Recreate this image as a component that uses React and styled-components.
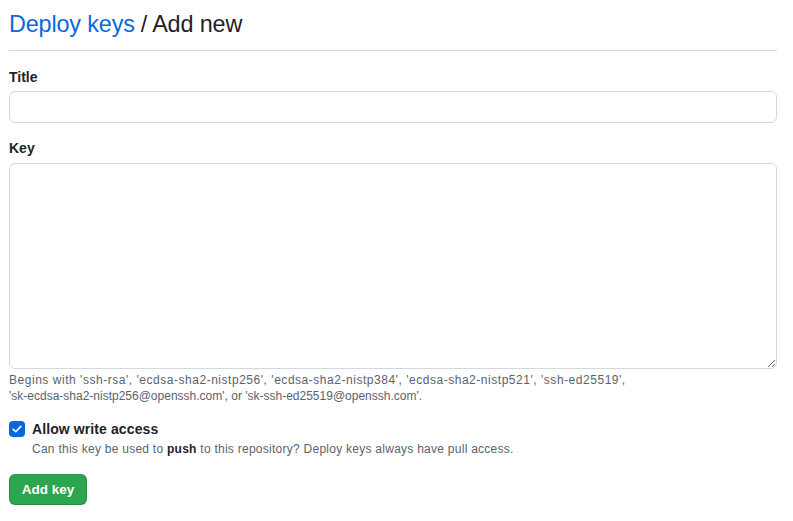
import React from "react";
import styled, { createGlobalStyle } from "styled-components";

const Global = createGlobalStyle`
  html, body { margin: 0; padding: 0; background: #fff; }
  body { font-family: "Liberation Sans", Arial, sans-serif; color: #1f2328; }
  * { box-sizing: border-box; }
`;

const Page = styled.div`
  padding: 0 16px 0 9px;
  width: 793px;
`;

const Header = styled.div`
  display: flex;
  align-items: center;
  height: 51px;
  padding-bottom: 1px;
  border-bottom: 1px solid #d1d9e0;
  margin-bottom: 16px;
  font-size: 23.4px;
  font-weight: 400;
  letter-spacing: -0.15px;
`;

const Crumb = styled.a`
  color: #0969da;
  text-decoration: none;
  margin-right: 6px;
`;

const Current = styled.span`
  color: #1f2328;
`;

const Field = styled.div`
  margin-bottom: ${(p) => p.$mb || 0}px;
`;

const Label = styled.label`
  display: block;
  font-size: 14px;
  font-weight: 700;
  line-height: 20px;
  margin-bottom: ${(p) => p.$mb ?? 5}px;
`;

const Input = styled.input`
  display: block;
  width: 100%;
  height: 32px;
  border: 1px solid #d1d9e0;
  border-radius: 6px;
  padding: 5px 12px;
  font-size: 14px;
  font-family: inherit;
  background: #fff;
  outline: none;
`;

const TextArea = styled.textarea`
  display: block;
  width: 100%;
  height: 206px;
  border: 1px solid #d1d9e0;
  border-radius: 6px;
  padding: 8px 12px;
  font-size: 14px;
  font-family: inherit;
  resize: vertical;
  outline: none;
`;

const Note = styled.p`
  margin: 3px 0 0;
  font-size: 12px;
  line-height: 16px;
  color: #59636e;
`;

const NoteLine = styled.span`
  display: block;
  letter-spacing: ${(p) => p.$ls || 0}px;
`;

const CheckRow = styled.div`
  display: flex;
  gap: 7px;
  margin-top: 15px;
`;

const Box = styled.span`
  flex: none;
  width: 16px;
  height: 16px;
  margin-top: 2px;
  border-radius: 4px;
  background: #0969da;
  display: flex;
  align-items: center;
  justify-content: center;
`;

const CheckText = styled.div`
  display: flex;
  flex-direction: column;
`;

const CheckLabel = styled.span`
  font-size: 14px;
  font-weight: 700;
  line-height: 20px;
  letter-spacing: 0.1px;
`;

const CheckNote = styled.span`
  font-size: 12px;
  line-height: 16px;
  letter-spacing: 0.26px;
  color: #59636e;
  margin-top: 2px;
  b { color: #1f2328; font-weight: 700; }
`;

const Button = styled.button`
  display: block;
  margin-top: 17px;
  width: 78px;
  height: 31px;
  padding: 0;
  border: 1px solid rgba(31, 35, 40, 0.15);
  border-radius: 6px;
  background: #2da44e;
  color: #fff;
  font-family: inherit;
  font-size: 13.5px;
  font-weight: 700;
  cursor: pointer;
`;

export default function App() {
  return (
    <>
      <Global />
      <Page>
        <Header>
          <Crumb href="#">Deploy keys</Crumb>
          <Current>/ Add new</Current>
        </Header>
        <Field $mb={15}>
          <Label $mb={4}>Title</Label>
          <Input type="text" />
        </Field>
        <Field>
          <Label>Key</Label>
          <TextArea />
          <Note>
            <NoteLine $ls={0.53}>
              Begins with 'ssh-rsa', 'ecdsa-sha2-nistp256', 'ecdsa-sha2-nistp384', 'ecdsa-sha2-nistp521', 'ssh-ed25519',
            </NoteLine>
            <NoteLine>'sk-ecdsa-sha2-nistp256@openssh.com', or 'sk-ssh-ed25519@openssh.com'.</NoteLine>
          </Note>
        </Field>
        <CheckRow>
          <Box>
            <svg width="12" height="12" viewBox="0 0 12 12" fill="none">
              <path d="M2.2 6.2l2.5 2.5L9.8 3.4" stroke="#fff" strokeWidth="1.6" strokeLinecap="round" strokeLinejoin="round" />
            </svg>
          </Box>
          <CheckText>
            <CheckLabel>Allow write access</CheckLabel>
            <CheckNote>
              Can this key be used to <b>push</b> to this repository? Deploy keys always have pull access.
            </CheckNote>
          </CheckText>
        </CheckRow>
        <Button>Add key</Button>
      </Page>
    </>
  );
}
